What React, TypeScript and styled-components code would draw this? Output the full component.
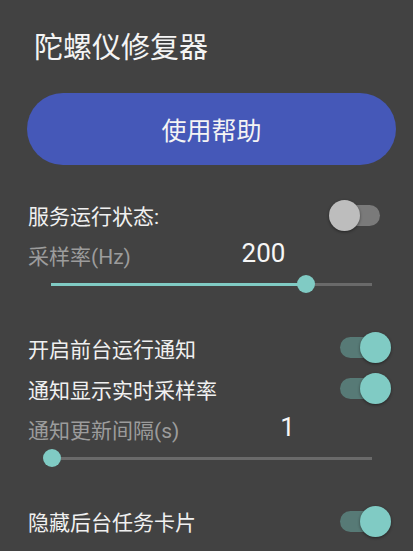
import React from 'react'
import styled, { createGlobalStyle } from 'styled-components'

const GlobalStyle = createGlobalStyle`
  html, body {
    margin: 0;
    padding: 0;
    background: #424242;
  }
  body {
    font-family: Roboto, "Noto Sans CJK SC", sans-serif;
    color: #f2f2f2;
  }
`

interface SwitchProps {
  on: boolean
}

const Toggle: React.FC<SwitchProps> = ({ on }) => (
  <SwitchBox>
    <SwitchTrack on={on} />
    <SwitchThumb on={on} />
  </SwitchBox>
)

interface SliderProps {
  percent: number
}

const Slider: React.FC<SliderProps> = ({ percent }) => (
  <SliderRow>
    <SliderTrack>
      <SliderFill style={{ width: `${percent}%` }} />
      <SliderThumb style={{ left: `${percent}%` }} />
    </SliderTrack>
  </SliderRow>
)

const App: React.FC = () => {
  return (
    <>
      <GlobalStyle />
      <Page>
        <Title>陀螺仪修复器</Title>
        <HelpButton>使用帮助</HelpButton>

        <Section>
          <Row>
            <Label>服务运行状态:</Label>
            <Toggle on={false} />
          </Row>
          <Row>
            <Label muted>采样率(Hz)</Label>
            <Value>200</Value>
          </Row>
          <Slider percent={79.3} />
        </Section>

        <Section>
          <Row tall>
            <Label>开启前台运行通知</Label>
            <Toggle on />
          </Row>
          <Row tall>
            <Label>通知显示实时采样率</Label>
            <Toggle on />
          </Row>
          <Row>
            <Label muted>通知更新间隔(s)</Label>
            <Value>1</Value>
          </Row>
          <Slider percent={0.3} />
        </Section>

        <Section>
          <Row>
            <Label>隐藏后台任务卡片</Label>
            <Toggle on />
          </Row>
        </Section>
      </Page>
    </>
  )
}

const Page = styled.div`
  display: flex;
  flex-direction: column;
  padding: 0 17px 0 27px;
  height: 551px;
  overflow: hidden;
`

const Title = styled.div`
  height: 89px;
  display: flex;
  align-items: center;
  padding-left: 7px;
  font-size: 29px;
  color: #f4f4f4;
`

const HelpButton = styled.button`
  margin-top: 4px;
  height: 72px;
  border: none;
  border-radius: 36px;
  background: #4558b8;
  color: #f4f4f4;
  font-family: Roboto, "Noto Sans CJK SC", sans-serif;
  font-size: 25px;
  padding: 0;
`

const Section = styled.div`
  display: flex;
  flex-direction: column;
  margin-top: 30px;

  & + & {
    margin-top: 34px;
  }
`

const Row = styled.div<{ tall?: boolean }>`
  display: flex;
  align-items: center;
  height: ${(p) => (p.tall ? 41 : 40)}px;
  padding-left: 1px;
`

const Label = styled.div<{ muted?: boolean }>`
  font-size: 21px;
  color: ${(p) => (p.muted ? '#9c9c9c' : '#f0f0f0')};
  white-space: nowrap;
`

const Value = styled.div`
  flex: 1;
  text-align: center;
  font-size: 26px;
  color: #f6f6f6;
  margin-top: -5px;
`

const SwitchBox = styled.div`
  position: relative;
  margin-left: auto;
  margin-right: 5px;
  width: 62px;
  height: 31px;
  flex-shrink: 0;
`

const SwitchTrack = styled.div<SwitchProps>`
  position: absolute;
  left: 11px;
  top: 5px;
  width: 40px;
  height: 21px;
  border-radius: 11px;
  background: ${(p) => (p.on ? '#577a76' : '#7a7a7a')};
`

const SwitchThumb = styled.div<SwitchProps>`
  position: absolute;
  top: 0;
  left: ${(p) => (p.on ? 31 : 0)}px;
  width: 31px;
  height: 31px;
  border-radius: 50%;
  background: ${(p) => (p.on ? '#80cbc4' : '#bdbdbd')};
  box-shadow: 0 1px 3px rgba(0, 0, 0, 0.45);
`

const SliderRow = styled.div`
  height: 18px;
  display: flex;
  align-items: center;
  padding: 0 24px;
`

const SliderTrack = styled.div`
  position: relative;
  flex: 1;
  height: 3px;
  background: #6a6a6a;
`

const SliderFill = styled.div`
  height: 100%;
  background: #80cbc4;
`

const SliderThumb = styled.div`
  position: absolute;
  top: 50%;
  width: 18px;
  height: 18px;
  margin: -9px 0 0 -9px;
  border-radius: 50%;
  background: #80cbc4;
`

export default App
